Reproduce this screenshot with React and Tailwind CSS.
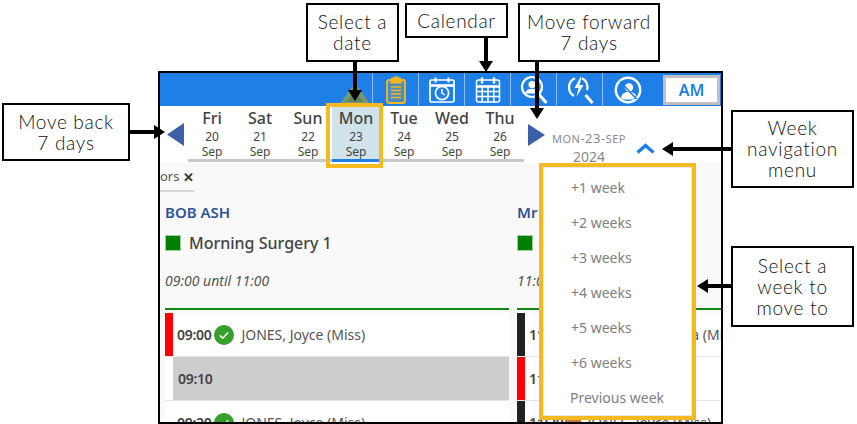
import React from "react";

const appFont = { fontFamily: '"Noto Sans", "Open Sans", sans-serif' };

function Callout({ className, children }) {
  return (
    <div
      className={`absolute flex items-center justify-center border-2 border-black bg-white text-center text-[19px] font-light leading-[21px] tracking-[0.7px] text-[#111] font-['Lato',sans-serif] ${className}`}
    >
      <div className="-mt-[1px]">{children}</div>
    </div>
  );
}

function Arrows() {
  const down = (x, y1, y2) => (
    <g key={`d${x}`}>
      <rect x={x - 2} y={y1} width="4" height={y2 - y1 - 8} fill="#000" />
      <polygon points={`${x - 7},${y2 - 11} ${x + 7},${y2 - 11} ${x},${y2}`} fill="#000" />
    </g>
  );
  const left = (y, x1, x2) => (
    <g key={`l${y}`}>
      <rect x={x2 + 8} y={y - 2} width={x1 - x2 - 8} height="4" fill="#000" />
      <polygon points={`${x2},${y} ${x2 + 11},${y - 7} ${x2 + 11},${y + 7}`} fill="#000" />
    </g>
  );
  return (
    <svg className="absolute left-0 top-0 z-30" width="857" height="424" viewBox="0 0 857 424">
      {down(355, 60, 101)}
      {down(486, 36, 72)}
      {down(537, 60, 119)}
      <rect x="129" y="130" width="26" height="4" fill="#000" />
      <polygon points="165,132 154,125 154,139" fill="#000" />
      {left(149, 733, 662)}
      {left(286, 733, 697)}
    </svg>
  );
}

function Cell({ children }) {
  return (
    <div className="flex h-full w-[46px] shrink-0 items-center justify-center border-l border-[#8dbdf1]">
      {children}
    </div>
  );
}

const ClipboardIcon = () => (
  <svg width="24" height="28" viewBox="0 0 24 28" fill="none" stroke="#f4b81f" strokeWidth="1.8">
    <rect x="3" y="4" width="18" height="23" rx="2" fill="#e9b23b" fillOpacity="0.25" />
    <path d="M8 4V2.5h2.5a1.5 1.5 0 0 1 3 0H16V4l1 2.5H7z" fill="#f4b81f" />
    <path d="M7 11h10M7 14.5h10M7 18h10M7 21.5h10" strokeWidth="1.4" />
  </svg>
);
const ClockCalIcon = () => (
  <svg width="28" height="28" viewBox="0 0 28 28" fill="none" stroke="#fff" strokeWidth="1.7">
    <rect x="2" y="4" width="24" height="22" rx="1.5" />
    <path d="M2 9.5h24" strokeWidth="2.6" />
    <path d="M7.5 1.5v5M20.5 1.5v5" strokeWidth="2" />
    <circle cx="14" cy="17" r="6.6" />
    <path d="M14 13v4.3l3 1.6" strokeWidth="1.5" />
  </svg>
);
const CalendarIcon = () => (
  <svg width="26" height="28" viewBox="0 0 26 28" fill="none" stroke="#fff" strokeWidth="1.5">
    <rect x="1.5" y="4" width="23" height="22" rx="2" />
    <path d="M1.5 10.5h23" strokeWidth="2.6" />
    <path d="M1.5 15.5h23M1.5 20.5h23M7.2 10.5V26M13 10.5V26M18.8 10.5V26" />
    <path d="M7 1.5v6M19 1.5v6" strokeWidth="2.4" />
  </svg>
);
const UserSearchIcon = () => (
  <svg width="28" height="30" viewBox="0 0 28 30" fill="none" stroke="#fff" strokeWidth="2.2">
    <circle cx="12" cy="12" r="10" />
    <circle cx="12" cy="9.5" r="3.6" fill="#fff" stroke="none" />
    <path d="M5 18.5c1-3.8 4-4.8 7-4.8s6 1 7 4.8z" fill="#fff" stroke="none" />
    <path d="M19.5 20l7 8" strokeWidth="3" />
  </svg>
);
const BoltSearchIcon = () => (
  <svg width="28" height="30" viewBox="0 0 28 30" fill="none" stroke="#fff" strokeWidth="2.2">
    <path d="M9 3.2A10 10 0 0 0 8 21M16 3.2a10 10 0 0 1 5 12" />
    <path d="M14.5 2L8.5 13h4l-2 9 7-12h-4l2-8z" fill="#fff" stroke="none" />
    <path d="M19.5 20l7 8" strokeWidth="3" />
  </svg>
);
const NoUserIcon = () => (
  <svg width="28" height="28" viewBox="0 0 28 28" fill="none" stroke="#fff" strokeWidth="2.4">
    <circle cx="14" cy="14" r="12.2" />
    <circle cx="15" cy="11.5" r="4.2" fill="#fff" stroke="none" />
    <path d="M7 22c.5-4.5 4-6 8-6s6.5 1.5 7 4l-3 3.5H9z" fill="#fff" stroke="none" />
    <path d="M6 5.5L22.5 23" strokeWidth="1.6" stroke="#1e7fe6" />
  </svg>
);
const WarnIcon = () => (
  <svg width="34" height="24" viewBox="0 0 34 24">
    <polygon points="17,1 33,23 1,23" fill="#77966f" />
    <polygon points="17,8 25,20 9,20" fill="#5f8263" />
  </svg>
);

function Header() {
  return (
    <div className="flex h-[33px] shrink-0 items-center justify-end bg-[#1e7fe6]">
      <div className="flex h-full w-[34px] items-end justify-center">
        <WarnIcon />
      </div>
      <Cell><ClipboardIcon /></Cell>
      <Cell><ClockCalIcon /></Cell>
      <Cell><CalendarIcon /></Cell>
      <Cell><UserSearchIcon /></Cell>
      <Cell><BoltSearchIcon /></Cell>
      <div className="flex h-full w-[51px] shrink-0 items-center justify-center border-l border-[#8dbdf1]">
        <NoUserIcon />
      </div>
      <div className="ml-[10px] mr-[1px] flex h-[30px] w-[57px] shrink-0 items-center justify-center border-[3px] border-[#c0c0c0] bg-white text-[16px] font-semibold text-[#1e7fe6]">
        AM
      </div>
    </div>
  );
}

const days = [
  ["Fri", "20"],
  ["Sat", "21"],
  ["Sun", "22"],
  ["Mon", "23", true],
  ["Tue", "24"],
  ["Wed", "25"],
  ["Thu", "26"],
];

function DayStrip() {
  return (
    <div className="flex h-[56px] shrink-0 bg-white">
      <div className="flex w-[28px] shrink-0 items-center justify-end pr-[4px] pb-[2px]">
        <svg width="17" height="23" viewBox="0 0 17 23"><polygon points="0,11.5 17,0 17,23" fill="#3c5fa9" /></svg>
      </div>
      {days.map(([d, n, active]) => (
        <div
          key={d}
          className={`flex h-[55px] w-[48px] shrink-0 flex-col items-center border-b-[3px] ${active ? "border-[#1e7fe6] bg-[#d0e3ea]" : "border-[#c9c9c9]"}`}
        >
          <div className="text-[16px] font-medium leading-[22px] text-[#444]">{d}</div>
          <div className="text-[12px] leading-[15px] text-[#444]">{n}</div>
          <div className="text-[12px] leading-[16px] text-[#444]">Sep</div>
        </div>
      ))}
      <div className="flex w-[24px] shrink-0 items-start justify-center pt-[17px]">
        <svg width="17" height="22" viewBox="0 0 17 22"><polygon points="17,11 0,0 0,22" fill="#3c5fa9" /></svg>
      </div>
      <div className="flex w-[82px] shrink-0 flex-col items-center pt-[22px] text-[#8a8a8a]">
        <div className="whitespace-nowrap text-[13px] leading-[18px] tracking-[0.5px]">
          <span className="text-[11px]">MON</span>-23-<span className="text-[11px]">SEP</span>
        </div>
        <div className="text-[14px] leading-[17px]">2024</div>
      </div>
      <div className="ml-[6px] flex items-start pt-[36px]">
        <svg width="19" height="11" viewBox="0 0 19 11" fill="none" stroke="#1e7fe6" strokeWidth="3.4">
          <path d="M1.5 9.5l8-7 8 7" />
        </svg>
      </div>
    </div>
  );
}

function Check() {
  return (
    <svg width="20" height="20" viewBox="0 0 20 20" className="shrink-0">
      <circle cx="10" cy="10" r="10" fill="#37a02c" />
      <path d="M5.8 10.4l2.9 2.8 5.4-5.8" fill="none" stroke="#fff" strokeWidth="1.5" />
    </svg>
  );
}

function Row({ bar, time, name, nameClass = "", grey, check = true, icon }) {
  return (
    <div className="flex h-[44px] shrink-0 border-b border-[#e3e6f0] bg-white">
      <div className="h-full w-[8px] shrink-0" style={{ background: bar || "transparent" }} />
      <div className={`flex flex-1 items-center pl-[4px] ${grey ? "bg-[#cdcdcd]" : ""}`}>
        <span className={`shrink-0 text-[14px] font-semibold text-[#444] tracking-[-0.3px] ${grey ? "pl-[1px] font-medium" : ""}`}>{time}</span>
        {check && !grey && <span className="ml-[3px]"><Check /></span>}
        {icon}
        {name && <span className={`whitespace-nowrap text-[14px] text-[#555] ${nameClass}`}>{name}</span>}
      </div>
    </div>
  );
}

function Column({ name, session, hours, rows, className }) {
  return (
    <div className={`shrink-0 ${className}`}>
      <div className="flex h-[40px] items-center whitespace-nowrap text-[15px] font-semibold text-[#2f5496]">{name}</div>
      <div className="flex h-[22px] items-center">
        <div className="h-[16px] w-[16px] shrink-0 border border-[#9fd09f] bg-[#008000]" />
        <span className="ml-[8px] whitespace-nowrap text-[16px] font-medium text-[#444]">{session}</span>
      </div>
      <div className="mt-[15px] h-[39px] whitespace-nowrap text-[14px] italic leading-[24px] text-[#555]">{hours}</div>
      <div className="h-[2px] bg-[#108a10]" />
      <div className="mt-[3px]">{rows}</div>
    </div>
  );
}

function Body() {
  return (
    <div className="min-h-0 flex-1 overflow-hidden bg-[#f9f9f9]">
      <div className="h-[29px] w-[34px] border-b-[2px] border-[#d4d4d4]">
        <div className="flex h-[28px] items-center text-[13px] text-[#555]">
          <span>ors</span>
          <span className="ml-[4px] text-[13px] font-bold leading-none text-[#333]">✕</span>
        </div>
      </div>
      <div className="flex gap-[8px] pl-[5px]">
        <Column
          className="w-[344px]"
          name="BOB ASH"
          session="Morning Surgery 1"
          hours="09:00 until 11:00"
          rows={
            <>
              <Row bar="#ff0000" time="09:00" name="JONES, Joyce (Miss)" nameClass="ml-[7px]" />
              <Row time="09:10" grey />
              <Row time="09:20" name="JONES, Joyce (Miss)" nameClass="ml-[7px]" />
            </>
          }
        />
        <Column
          className="w-[300px]"
          name="Mr"
          session=""
          hours="11:00"
          rows={
            <>
              <Row bar="#222" time="11:00" check={false} name="Maria (Miss)" nameClass="ml-[98px]" />
              <Row bar="#ff0000" time="11:10" check={false} />
              <Row
                bar="#222"
                time="11:20"
                check={false}
                icon={<span className="ml-[2px] h-[14px] w-[16px] bg-[#c9793b]" />}
                name="JONES, Joyce (Miss)"
                nameClass="ml-[6px]"
              />
            </>
          }
        />
      </div>
    </div>
  );
}

const menu = ["+1 week", "+2 weeks", "+3 weeks", "+4 weeks", "+5 weeks", "+6 weeks", "Previous week"];

function WeekMenu() {
  return (
    <div className="absolute left-[539px] top-[163px] z-10 flex h-[257px] w-[157px] flex-col border-4 border-[#f5b921] bg-white pt-[3px] shadow-[inset_0_0_0_1px_#e8e8e8]" style={appFont}>
      {menu.map((m, i) => (
        <div key={m} className={`flex h-[35px] shrink-0 items-center text-[14px] text-[#808080] ${i === 6 ? "pl-[27px]" : "pl-[28px]"}`}>
          {m}
        </div>
      ))}
    </div>
  );
}

export default function App() {
  return (
    <div className="relative h-[424px] w-[857px] overflow-hidden bg-white">
      <div className="absolute left-[158px] top-[71px] flex h-[353px] w-[565px] flex-col overflow-hidden border-2 border-black bg-white" style={appFont}>
        <Header />
        <div className="h-px shrink-0 bg-white" />
        <DayStrip />
        <Body />
      </div>
      <WeekMenu />
      <div className="absolute left-[326px] top-[103px] z-20 h-[65px] w-[57px] border-4 border-[#f5b921]" />
      <Callout className="left-[306px] top-[3px] z-40 h-[59px] w-[93px]">Select a<br />date</Callout>
      <Callout className="left-[405px] top-[3px] z-40 h-[35px] w-[103px]">Calendar</Callout>
      <Callout className="left-[518px] top-[3px] z-40 h-[59px] w-[142px]">Move forward<br />7 days</Callout>
      <Callout className="left-[2px] top-[103px] z-40 h-[58px] w-[128px]">Move back<br />7 days</Callout>
      <Callout className="left-[731px] top-[110px] z-40 h-[78px] w-[123px]">Week<br />navigation<br />menu</Callout>
      <Callout className="left-[731px] top-[246px] z-40 h-[81px] w-[123px]">Select a<br />week to<br />move to</Callout>
      <Arrows />
    </div>
  );
}
